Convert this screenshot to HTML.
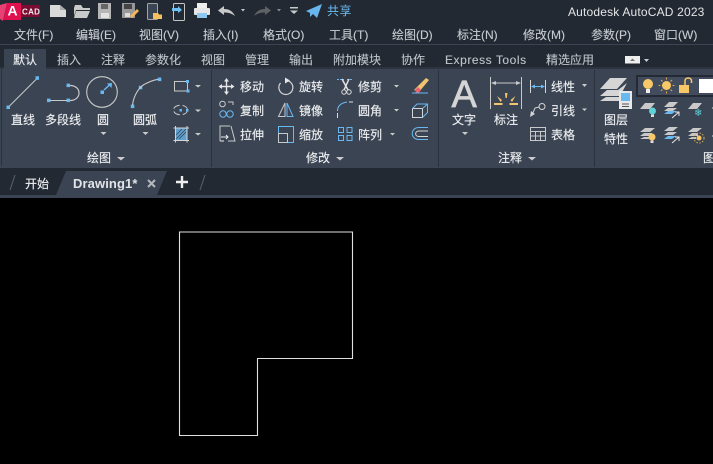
<!DOCTYPE html>
<html><head><meta charset="utf-8"><style>
html,body{margin:0;padding:0;background:#000;width:713px;height:464px;overflow:hidden}
svg{display:block}
text{font-family:"Liberation Sans","Noto Sans CJK SC",sans-serif;font-size:12px;fill:#d8dbdf}
.m{fill:#c8ccd1;stroke:#c8ccd1;stroke-width:.12}.t{fill:#bfc3c9;stroke:#bfc3c9;stroke-width:.12}
.w{fill:#eceef0;stroke:#eceef0;stroke-width:.15}
</style></head><body>
<svg width="713" height="464" viewBox="0 0 713 464" xmlns="http://www.w3.org/2000/svg">
<rect width="713" height="464" fill="#000"/>
<rect width="713" height="168" fill="#222933"/>
<rect y="44" width="713" height="1" fill="#3b4453"/>
<rect y="68" width="713" height="100" fill="#3b4453"/>
<rect y="168" width="713" height="27" fill="#222933"/>
<rect y="195" width="713" height="3" fill="#3b4453"/>
<rect y="67" width="713" height="2" fill="#2d3440"/>
<rect x="4" y="49" width="42" height="20" fill="#3b4453"/>

<!-- logo -->
<path d="M0 5L7 3L3 21L0 19Z" fill="#e83f75"/>
<path d="M7 3H21V20H3.500Z" fill="#e0114f"/>
<rect x="21" y="5" width="19" height="12" fill="#7b0c31"/>
<text x="7.500" y="15.500" style="font-size:14px;font-weight:700;fill:#fff">A</text>
<text x="22" y="14.500" style="font-size:8px;font-weight:700;fill:#eee;letter-spacing:.3px">CAD</text>

<!-- quick access -->
<path d="M50 5H60L66 10V17H50Z" fill="#d9d9d9"/>
<path d="M60 5L66 10H60Z" fill="#aaa"/>
<path d="M74 8V16L76 10H90V8H83L81 5H75Z" fill="#c9c9c9"/>
<path d="M76 11H90L87 18H74Z" fill="#c9c9c9"/>
<rect x="98" y="3" width="13" height="16" fill="#b5b5b5"/>
<rect x="101" y="4" width="7" height="5" fill="#666"/><rect x="101" y="13" width="8" height="5" fill="#e2e2e2"/>
<rect x="122" y="3" width="13" height="15" fill="#999"/><rect x="124" y="4" width="8" height="5" fill="#444"/><rect x="125" y="13" width="5" height="4" fill="#ddd"/>
<path d="M130 16L137 9L139 11L132 18Z" fill="#f2b85c"/>
<rect x="147.500" y="3.500" width="10" height="16" rx="1" fill="#3b4453" stroke="#a5a5a5"/>
<path d="M153 13H158L159 14.500H162V19H153Z" fill="#f6c05c"/>
<rect x="173.500" y="3.500" width="11" height="17" rx="1" fill="none" stroke="#c5c5c5"/>
<path d="M172 8H178V6L182 10L178 13V11H172Z" fill="#6cc1f2"/>
<path d="M197 3H207V8H197Z" fill="#eee"/><rect x="194" y="8" width="16" height="7" rx="1" fill="#e6e6e6"/><rect x="197" y="13" width="10" height="5" fill="#8cc8ef"/>
<path d="M218 10.500L224 6V9C230 9 233 12 235 16C231 13 228 12.500 224 12.500V15Z" fill="#c9c9c9"/>
<path d="M241 9L245 9L243 11.500Z" fill="#c4c4c4"/>
<path d="M271 10.500L265 6V9C259 9 256 12 254 16C258 13 261 12.500 265 12.500V15Z" fill="#5e6166"/>
<path d="M277 9L281 9L279 11.500Z" fill="#8a8c90"/>
<rect x="290" y="7" width="8" height="1.500" fill="#c9c9c9"/><path d="M290 10.500H298L294 14Z" fill="#c9c9c9"/>
<path d="M306 11L322 4L317 18L313 14L310 17V13Z" fill="#69b6ed"/>
<text x="327" y="15" style="font-size:12px;fill:#6cbcf2;letter-spacing:.5px">共享</text>
<text x="568" y="16" style="font-size:12px;fill:#e4e6e8;letter-spacing:.18px">Autodesk AutoCAD 2023</text>

<!-- menu -->
<text class="m" x="14" y="39">文件(F)</text>
<text class="m" x="76" y="39">编辑(E)</text>
<text class="m" x="139" y="39">视图(V)</text>
<text class="m" x="203" y="39">插入(I)</text>
<text class="m" x="263" y="39">格式(O)</text>
<text class="m" x="329" y="39">工具(T)</text>
<text class="m" x="392" y="39">绘图(D)</text>
<text class="m" x="457" y="39">标注(N)</text>
<text class="m" x="523" y="39">修改(M)</text>
<text class="m" x="591" y="39">参数(P)</text>
<text class="m" x="654" y="39">窗口(W)</text>
<!-- tabs -->
<text class="w" x="13" y="64">默认</text>
<text class="t" x="57" y="64">插入</text>
<text class="t" x="101" y="64">注释</text>
<text class="t" x="145" y="64">参数化</text>
<text class="t" x="201" y="64">视图</text>
<text class="t" x="245" y="64">管理</text>
<text class="t" x="289" y="64">输出</text>
<text class="t" x="333" y="64">附加模块</text>
<text class="t" x="401" y="64">协作</text>
<text class="t" x="445" y="64" style="letter-spacing:.55px">Express Tools</text>
<text class="t" x="546" y="64">精选应用</text>
<rect x="625" y="56" width="15" height="7.500" fill="#eee"/><path d="M630 61H635L632.500 58.500Z" fill="#777"/>
<path d="M644 59H649L646.500 62Z" fill="#ccc"/>

<!-- separators -->
<rect x="1" y="70" width="1" height="96" fill="#2a313c"/>
<rect x="211" y="70" width="1" height="97" fill="#2a313c"/>
<rect x="438" y="70" width="1" height="97" fill="#2a313c"/>
<rect x="594" y="70" width="1" height="97" fill="#2a313c"/>

<!-- draw panel -->
<line x1="9" y1="106.500" x2="36.500" y2="79" stroke="#c9c9c9"/>
<g fill="#69b9f0">
<rect x="6.500" y="105.500" width="3.500" height="3.500"/><rect x="35.500" y="76.300" width="3.500" height="3.500"/>
<rect x="47" y="98.600" width="3.500" height="3.500"/><rect x="66.500" y="98.600" width="3.500" height="3.500"/><rect x="66.500" y="83.600" width="3.500" height="3.500"/>
<rect x="100.500" y="90.500" width="3.500" height="3.500"/>
<rect x="130.800" y="104.600" width="3.500" height="3.500"/><rect x="138.800" y="85.800" width="3.500" height="3.500"/><rect x="157.800" y="77.600" width="3.500" height="3.500"/>
</g>
<line x1="50" y1="100.500" x2="67" y2="100.500" stroke="#c9c9c9"/>
<path d="M70 85.500C82 85.500 82 100.500 70 100.500" fill="none" stroke="#c9c9c9" stroke-width="1.200"/>
<circle cx="102" cy="92" r="15.300" fill="none" stroke="#c9c9c9" stroke-width="1.100"/>
<line x1="104" y1="90" x2="110" y2="84.500" stroke="#69b9f0" stroke-width="1.500"/>
<path d="M107 83.500L112 83L111.500 88Z" fill="#69b9f0"/>
<path d="M132.500 105C134 94 140 86 146 83.500C150 81.500 154 80 158 79.300" fill="none" stroke="#c9c9c9" stroke-width="1.100"/>
<text class="w" x="11" y="124">直线</text>
<text class="w" x="45" y="124">多段线</text>
<text class="w" x="97" y="124">圆</text>
<text class="w" x="133" y="124">圆弧</text>
<path d="M100.500 132H106.500L103.500 135Z" fill="#ccc"/>
<path d="M142.500 132H148.500L145.500 135Z" fill="#ccc"/>
<rect x="174.500" y="81.500" width="13" height="9.500" fill="none" stroke="#c9c9c9"/>
<rect x="186" y="80" width="3" height="3" fill="#69b9f0"/><rect x="186.500" y="89.500" width="3" height="3" fill="#69b9f0"/>
<path d="M195 85H201L198 87.500Z" fill="#ccc"/>
<ellipse cx="180.500" cy="110" rx="7" ry="4.800" fill="none" stroke="#c9c9c9" stroke-dasharray="7 3"/>
<rect x="179.500" y="109" width="2.500" height="2.500" fill="#69b9f0"/><rect x="186" y="109" width="2.500" height="2.500" fill="#69b9f0"/>
<path d="M195 109.500H201L198 112Z" fill="#ccc"/>
<rect x="175" y="128" width="12" height="12" fill="#69b9f0" opacity=".8"/>
<path d="M173.500 128H189M173.500 140.500H189M175.500 126V142.500M187 126V142.500" stroke="#d5d5d5" fill="none"/>
<path d="M176 139L186 129M179 139L186 132M176 135L182 129" stroke="#3b4453" stroke-width=".8"/>
<path d="M195 133H201L198 135.500Z" fill="#ccc"/>
<text class="w" x="87" y="162">绘图</text>
<path d="M117 157H125L121 160.500Z" fill="#ccc"/>

<!-- modify -->
<path d="M226.500 80V93M220 86.500H233" stroke="#e6e6e6" stroke-width="1.400"/>
<path d="M226.500 78L224 81.500H229ZM226.500 95L224 91.500H229ZM218.500 86.500L222 84V89ZM234.500 86.500L231 84V89Z" fill="#e6e6e6"/>
<text class="w" x="240" y="91">移动</text>
<path d="M286 80.500A7 7 0 1 1 280.500 83" fill="none" stroke="#d5d5d5" stroke-width="1.200"/>
<path d="M285 77.500L290 80.500L285 83.500Z" fill="#e6e6e6"/>
<text class="w" x="299" y="91">旋转</text>
<path d="M337 79.500H344M347 79.500H353" stroke="#69b9f0" stroke-dasharray="2 1"/>
<path d="M342 79L348 90M349 79L344 90" stroke="#e4e4e4" stroke-width="1.500"/>
<circle cx="344" cy="92" r="2.200" fill="none" stroke="#ddd"/><circle cx="349" cy="92" r="2.200" fill="none" stroke="#ddd"/>
<text class="w" x="358" y="91">修剪</text>
<path d="M394 85H399L396.500 87.500Z" fill="#ccc"/>
<path d="M414 90L426 78L429 80L419 92Z" fill="#f1c470"/>
<path d="M415 90L418 87L421 90L419 92.500H416Z" fill="#e8636f"/>
<path d="M412 93H428" stroke="#69b9f0"/>

<circle cx="222.500" cy="104" r="2.800" fill="none" stroke="#c9c9c9"/>
<path d="M228 102H233V105" fill="none" stroke="#c9c9c9"/>
<circle cx="223" cy="114" r="3.200" fill="none" stroke="#69b9f0"/><circle cx="230" cy="114" r="3.200" fill="none" stroke="#69b9f0"/>
<text class="w" x="240" y="115">复制</text>
<path d="M285 103L278.500 116.500H285Z" fill="none" stroke="#c9c9c9"/>
<path d="M287 103L293 116.500H287Z" fill="none" stroke="#69b9f0"/>
<text class="w" x="299" y="115">镜像</text>
<path d="M337.500 111C337.500 106 341 103 347 102" fill="none" stroke="#69b9f0" stroke-width="1.100"/>
<path d="M349 102H353M337.500 113V118" stroke="#ddd"/>
<text class="w" x="358" y="115">圆角</text>
<path d="M394 109H399L396.500 111.500Z" fill="#ccc"/>
<rect x="412.500" y="108.500" width="10" height="9" fill="none" stroke="#d5d5d5"/>
<path d="M412.500 108.500L417 104H427.500V112.500L422.500 117.500M422.500 108.500L427.500 104" fill="none" stroke="#69b9f0"/>

<path d="M220 141V126H230M231 126L235 141H228" fill="none" stroke="#c9c9c9"/>
<path d="M220 141H224M221 137H228M226 135L228 137L226 139" fill="none" stroke="#eee"/>
<rect x="278.500" y="133.500" width="9" height="9" fill="none" stroke="#c9c9c9"/>
<path d="M278.500 133V126.500H293.500V142.500H288" fill="none" stroke="#69b9f0"/>
<text class="w" x="240" y="139">拉伸</text>
<text class="w" x="299" y="139">缩放</text>
<g fill="none" stroke="#69b9f0"><rect x="338.500" y="127.500" width="5" height="5"/><rect x="347" y="127.500" width="5" height="5"/><rect x="338.500" y="135.500" width="5" height="5"/><rect x="347" y="135.500" width="5" height="5"/></g>
<text class="w" x="358" y="139">阵列</text>
<path d="M390 133H395L392.500 135.500Z" fill="#ccc"/>
<path d="M428 127.500H419C410 127.500 410 139.500 419 139.500H428" fill="none" stroke="#69b9f0"/>
<path d="M428 131H419C414.500 131 414.500 136.500 419 136.500H428" fill="none" stroke="#d5d5d5"/>
<text class="w" x="306" y="162">修改</text>
<path d="M336 157H344L340 160.500Z" fill="#ccc"/>

<!-- annotation -->
<text x="451.500" y="107" style="font-size:38px;fill:#d5d5d5;stroke:#d5d5d5;stroke-width:.7">A</text>
<text class="w" x="452" y="124">文字</text>
<path d="M462 132H468L465 135Z" fill="#ccc"/>
<path d="M490.500 77V109M521.500 77V109" stroke="#c9c9c9"/>
<path d="M492 83H520" stroke="#c9c9c9"/>
<path d="M491 83L496 81V85ZM521 83L516 81V85Z" fill="#c9c9c9"/>
<path d="M505 93H507.500L506.800 98H505.500ZM497 96L502 100L500.500 102ZM515.500 96L510.500 100L512 102ZM494 103H502.500V105H494ZM509.500 103H518V105H509.500Z" fill="#f1c470"/>
<text class="w" x="494" y="124">标注</text>
<path d="M530.500 80V93M545.500 80V93" stroke="#d5d5d5"/>
<path d="M532 86.500H544" stroke="#69b9f0"/>
<path d="M531 86.500L535 84.500V88.500ZM545 86.500L541 84.500V88.500Z" fill="#69b9f0"/>
<text class="w" x="551" y="91">线性</text>
<path d="M582 84H587L584.500 87Z" fill="#ccc"/>
<circle cx="542" cy="106.500" r="3" fill="none" stroke="#d5d5d5"/>
<path d="M539 107L535 108L532 115" fill="none" stroke="#d5d5d5"/>
<path d="M530 117L531 111L535 114Z" fill="#d5d5d5"/>
<text class="w" x="551" y="115">引线</text>
<path d="M582 108.500H587L584.500 111Z" fill="#ccc"/>
<g fill="none" stroke="#c9c9c9"><rect x="530.500" y="127.500" width="15" height="13"/><path d="M530 131.500H546M530 136H546M535.500 131.500V141M540.500 131.500V141"/></g>
<text class="w" x="551" y="139">表格</text>
<text class="w" x="498" y="162">注释</text>
<path d="M528 157H536L532 160.500Z" fill="#ccc"/>

<!-- layers -->
<path d="M600 89L610 78H627L617 89Z" fill="#d5d5d5"/>
<path d="M600 96L607 90H618L627 83L620 96Z" fill="#d5d5d5"/>
<path d="M600 101L606 97H620V101Z" fill="#d5d5d5"/>
<rect x="619" y="91" width="13" height="18" fill="#e8e8e8"/>
<rect x="621" y="93" width="9" height="8" fill="#69b9f0"/>
<path d="M622 104H629M622 106.500H629" stroke="#555"/>
<text class="w" x="604" y="124">图层</text>
<text class="w" x="604" y="143">特性</text>
<text class="w" x="703" y="162">图</text>
<rect x="636" y="75" width="77" height="22" fill="#232a35"/>
<rect x="638" y="77" width="75" height="18" fill="#434c5c"/>
<circle cx="648" cy="84" r="5" fill="#f8c868"/><rect x="646" y="89" width="4" height="4" fill="#eee"/>
<circle cx="666.500" cy="85.500" r="4.500" fill="#f8c868"/>
<path d="M666.500 77.500V79.500M666.500 91.500V93.500M658.500 85.500H660.500M672.500 85.500H674.500M661 80L662.500 81.500M672 80L670.500 81.500M661 91L662.500 89.500M672 91L670.500 89.500" stroke="#d8a855"/>
<rect x="679" y="85" width="10" height="8" fill="#f8c868"/>
<path d="M685 85V81C685 77 691.500 77 691.500 81V83" fill="none" stroke="#f8c868" stroke-width="1.500"/>
<rect x="699" y="79" width="14" height="14" fill="#fff"/>
<path d="M640 109L645 103H655L650 109Z" fill="#c9c9c9"/><circle cx="652.500" cy="111" r="3.500" fill="#5fd1d8"/><rect x="651" y="114.500" width="3" height="2.500" fill="#ddd"/>
<path d="M664 107L669 102H678L673 107ZM664 111L668 108H677L673 111Z" fill="#c9c9c9"/><path d="M664 114L668 111H676L672 114Z" fill="#69b9f0"/><path d="M672 118L679 112M675 112H679V116" stroke="#e6e6e6" fill="none"/>
<path d="M688 109L693 103H702L697 109Z" fill="#c9c9c9"/><text x="694" y="116" style="font-size:10px;fill:#5fd1d8">❄</text>
<path d="M640 132L645 128H655L650 132ZM640 136L644 133H652V136ZM640 139L644 137H650V139Z" fill="#c9c9c9"/><circle cx="652" cy="137" r="3.500" fill="#f8c868"/><rect x="650.500" y="140.500" width="3" height="2.500" fill="#ddd"/>
<path d="M664 131L669 127H678L673 131ZM664 135L668 132H677L673 135Z" fill="#c9c9c9"/><path d="M664 139L668 136H676L672 139Z" fill="#69b9f0"/><path d="M672 143L679 137M675 137H679V141" stroke="#e6e6e6" fill="none"/>
<path d="M688 132L693 128H702L697 132ZM688 136L692 133H698V136ZM688 139L692 137H696V139Z" fill="#c9c9c9"/><circle cx="699" cy="138" r="2.500" fill="#f8c868"/><circle cx="699" cy="138" r="5" fill="none" stroke="#d8a855" stroke-dasharray="1.500 1.500"/>
<path d="M712 108H713M712 136H713" stroke="#ddd"/>

<!-- file tabs -->
<path d="M66 171H167L157 195H56Z" fill="#3b4453"/>
<path d="M10 190L15 175" stroke="#5c6370"/>
<text class="w" x="25" y="188">开始</text>
<text x="73" y="188" style="font-size:13px;font-weight:700;fill:#e2e4e7;letter-spacing:.1px">Drawing1*</text>
<path d="M148 180L155 187M155 180L148 187" stroke="#b5b9c0" stroke-width="2"/>
<path d="M182 176V188M176 182H188" stroke="#eee" stroke-width="2.400"/>
<path d="M200 190L205 175" stroke="#5c6370"/>

<!-- drawing -->
<path d="M179.500 232H352.500V358.500H257.500V435.500H179.500Z" fill="none" stroke="#e0e0e0" stroke-width="1.100"/>
</svg>
</body></html>
